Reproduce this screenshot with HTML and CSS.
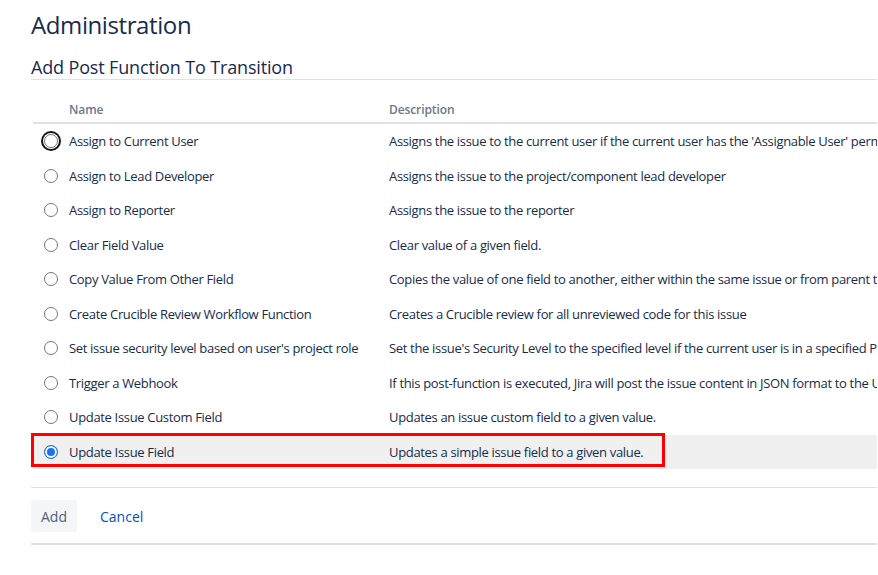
FILE: index.html
```html
<!DOCTYPE html>
<html>
<head>
<meta charset="utf-8">
<link rel="stylesheet" href="styles.css">
</head>
<body>
<div class="page">
  <h1 class="title">Administration</h1>
  <h2 class="subtitle">Add Post Function To Transition</h2>
  <div class="table-wrap">
    <table class="funcs">
      <thead>
        <tr><th class="c-radio"></th><th class="c-name">Name</th><th class="c-desc">Description</th></tr>
      </thead>
      <tbody>
        <tr><td class="c-radio"><input type="radio" name="f" class="radio focused"></td><td>Assign to Current User</td><td>Assigns the issue to the current user if the current user has the 'Assignable User' permission.</td></tr>
        <tr><td class="c-radio"><input type="radio" name="f" class="radio"></td><td>Assign to Lead Developer</td><td>Assigns the issue to the project/component lead developer</td></tr>
        <tr><td class="c-radio"><input type="radio" name="f" class="radio"></td><td>Assign to Reporter</td><td>Assigns the issue to the reporter</td></tr>
        <tr><td class="c-radio"><input type="radio" name="f" class="radio"></td><td>Clear Field Value</td><td>Clear value of a given field.</td></tr>
        <tr><td class="c-radio"><input type="radio" name="f" class="radio"></td><td>Copy Value From Other Field</td><td>Copies the value of one field to another, either within the same issue or from parent to sub-task.</td></tr>
        <tr><td class="c-radio"><input type="radio" name="f" class="radio"></td><td>Create Crucible Review Workflow Function</td><td>Creates a Crucible review for all unreviewed code for this issue</td></tr>
        <tr><td class="c-radio"><input type="radio" name="f" class="radio"></td><td>Set issue security level based on user's project role</td><td>Set the issue's Security Level to the specified level if the current user is in a specified Project Role.</td></tr>
        <tr><td class="c-radio"><input type="radio" name="f" class="radio"></td><td>Trigger a Webhook</td><td>If this post-function is executed, Jira will post the issue content in JSON format to the URL specified.</td></tr>
        <tr><td class="c-radio"><input type="radio" name="f" class="radio"></td><td>Update Issue Custom Field</td><td>Updates an issue custom field to a given value.</td></tr>
        <tr class="selected"><td class="c-radio"><input type="radio" name="f" class="radio" checked></td><td>Update Issue Field</td><td>Updates a simple issue field to a given value.</td></tr>
      </tbody>
    </table>
    <div class="highlight"></div>
  </div>
  <div class="actions">
    <button class="btn-add">Add</button>
    <a class="cancel" href="#">Cancel</a>
  </div>
</div>
</body>
</html>
```

FILE: styles.css
```css
html, body {
  margin: 0;
  padding: 0;
  overflow: hidden;
  background: #fff;
}
body {
  font-family: "Open Sans", "Noto Sans", sans-serif;
  color: #172b4d;
}
.page {
  padding-left: 31px;
  width: 846px;
}
.title {
  margin: 0;
  padding-top: 9px;
  font-size: 24px;
  font-weight: 400;
  line-height: 32px;
  letter-spacing: -0.4px;
}
.subtitle {
  margin: 0;
  margin-top: 14px;
  font-size: 18px;
  font-weight: 400;
  line-height: 24px;
  letter-spacing: -0.15px;
  border-bottom: 1px solid #dfe1e6;
  padding-bottom: 0;
}
.table-wrap {
  position: relative;
  overflow: hidden;
  margin-top: 16px;
  padding-bottom: 18px;
  border-bottom: 1px solid #dfe1e6;
}
.funcs {
  border-collapse: collapse;
  width: 1100px;
  margin-left: 2px;
  font-size: 13px;
  letter-spacing: -0.33px;
}
.funcs th {
  text-align: left;
  font-size: 12px;
  font-weight: 600;
  color: #6b778c;
  height: 26px;
  padding: 0;
  letter-spacing: -0.1px;
  border-bottom: 2px solid #dfe1e6;
}
.funcs td {
  padding: 0;
  height: 34.5px;
  white-space: nowrap;
  vertical-align: middle;
}
.funcs .c-radio {
  width: 36px;
}
.funcs .c-name, .funcs td:nth-child(2) {
  width: 320px;
}
.radio {
  appearance: none;
  -webkit-appearance: none;
  display: block;
  margin: 0 0 0 11px;
  width: 14px;
  height: 14px;
  border: 1px solid #767676;
  border-radius: 50%;
  background: #fff;
  box-sizing: border-box;
}
.radio:checked {
  border-color: #1a73e8;
  background: #1a73e8;
  box-shadow: inset 0 0 0 2px #fff;
}
.radio.focused {
  box-shadow: 0 0 0 1px #fff, 0 0 0 3px #111;
}
.funcs tr.selected td {
  background: #f0f0f0;
}
.highlight {
  position: absolute;
  left: 0;
  top: 337px;
  width: 628px;
  height: 28px;
  border: 3px solid #f00;
}
.actions {
  display: flex;
  align-items: center;
  gap: 23px;
  padding: 12px 0 11px;
  border-bottom: 2px solid #dfe1e6;
}
.btn-add {
  font-family: inherit;
  font-size: 14px;
  color: #505f79;
  background: #f4f5f7;
  border: none;
  border-radius: 3px;
  height: 32px;
  width: 46px;
  padding: 0;
}
.cancel {
  font-size: 14px;
  color: #0052cc;
  text-decoration: none;
}
```
